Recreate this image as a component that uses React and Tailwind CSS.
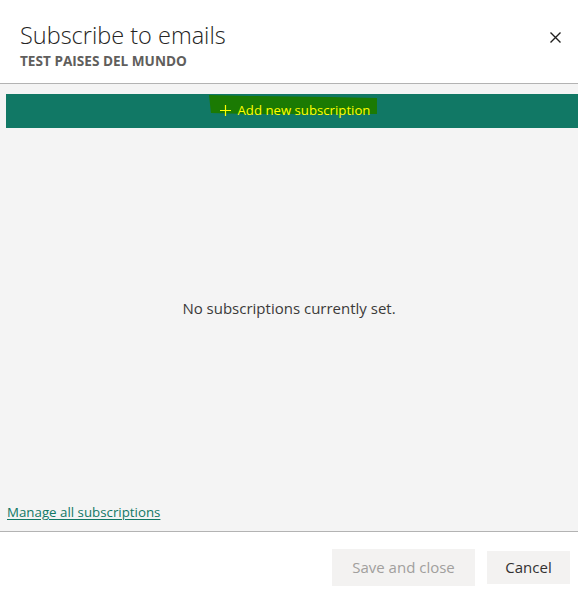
import React from "react";

const font = { fontFamily: '"Open Sans", "Noto Sans", sans-serif' };

const Highlight = () => (
  <svg
    className="absolute left-[-11px] top-[-6px]"
    width="170"
    height="22"
    viewBox="0 0 170 22"
  >
    <path d="M0 0 L40 1 L120 2 L168 3 L168 19 L120 19 L40 19 L2 18 Z" fill="#1b7a03" />
  </svg>
);

export default function App() {
  return (
    <div
      className="w-[578px] h-[592px] bg-white flex flex-col text-[#333]"
      style={font}
    >
      {/* header */}
      <div className="h-[84px] border-b border-[#b3b3b3] flex justify-between px-5 pt-[19px]">
        <div>
          <h1 className="text-[23.5px] leading-[32px] font-light text-[#252423]">
            Subscribe to emails
          </h1>
          <p className="text-[13.6px] leading-[19px] font-bold text-[#605e5c]">
            TEST PAISES DEL MUNDO
          </p>
        </div>
        <button className="mt-[11px] mr-[-4px] w-[14px] h-[14px] flex items-center justify-center">
          <svg width="11" height="11" viewBox="0 0 11 11">
            <path d="M0.5 0.5 L10.5 10.5 M10.5 0.5 L0.5 10.5" stroke="#201f1e" strokeWidth="1.4" />
          </svg>
        </button>
      </div>

      {/* body */}
      <div className="flex-1 bg-[#f4f4f4] border-b border-[#b3b3b3] flex flex-col pt-[10px]">
        <div className="ml-[6px] h-[34px] bg-[#117865] flex items-center justify-center">
          <div className="relative flex items-center gap-[7px] text-[#ffff00] text-[13.2px] mt-[-1px] ml-[6px]">
            <Highlight />
            <svg className="relative shrink-0" width="11" height="11" viewBox="0 0 11 11">
              <path d="M5.5 0 V11 M0 5.5 H11" stroke="#ffff00" strokeWidth="1.2" />
            </svg>
            <span className="relative">Add new subscription</span>
          </div>
        </div>
        <div className="flex-1 flex items-center justify-center pb-[10px]">
          <p className="text-[15px] text-[#3b3a39]">No subscriptions currently set.</p>
        </div>
        <div className="px-[7px] pb-[8px]">
          <a href="#" className="text-[13.3px] text-[#117865] underline underline-offset-2">
            Manage all subscriptions
          </a>
        </div>
      </div>

      {/* footer */}
      <div className="h-[60px] flex items-start justify-end gap-3 pr-2 pt-[17px]">
        <button className="w-[143px] h-[37px] bg-[#f3f2f1] text-[#a19f9d] text-[15px]">
          Save and close
        </button>
        <button className="w-[83px] h-[33px] mt-[2px] bg-[#f3f2f1] text-[#323130] text-[15px]">
          Cancel
        </button>
      </div>
    </div>
  );
}
